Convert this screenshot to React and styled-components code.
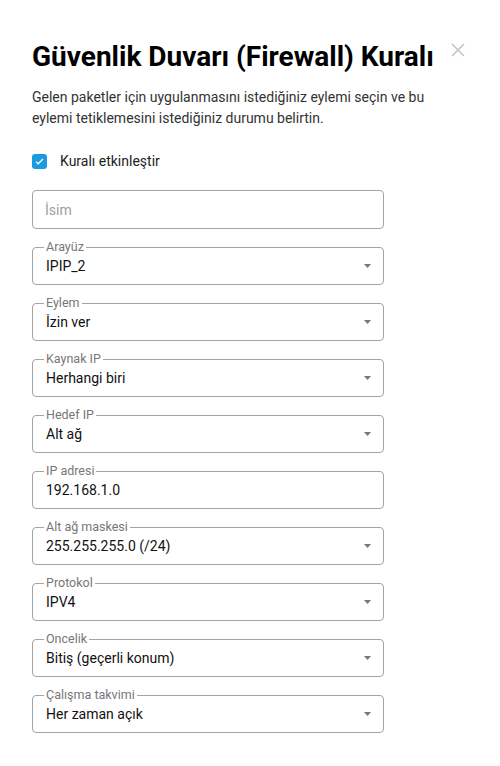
import React from 'react';
import styled, { createGlobalStyle } from 'styled-components';

const Global = createGlobalStyle`
  body {
    margin: 0;
    background: #fff;
    font-family: Roboto, "Liberation Sans", sans-serif;
    color: #111;
  }
`;

const Dialog = styled.div`
  position: relative;
  width: 500px;
  padding: 39px 0 0 32px;
  box-sizing: border-box;
`;

const Close = styled.button`
  position: absolute;
  top: 42px;
  left: 450px;
  width: 16px;
  height: 16px;
  padding: 0;
  border: 0;
  background: none;
  cursor: pointer;
`;

const Title = styled.h1`
  margin: 0;
  font-size: 28px;
  line-height: 36px;
  font-weight: 700;
  color: #000;
`;

const Lead = styled.p`
  margin: 12px 0 0;
  width: 400px;
  font-size: 14px;
  line-height: 21px;
  color: #333;
`;

const CheckRow = styled.label`
  display: flex;
  align-items: center;
  gap: 13px;
  margin-top: 24px;
  font-size: 14px;
  color: #222;
`;

const Box = styled.span`
  width: 15px;
  height: 15px;
  border-radius: 3px;
  background: #1a9be0;
  display: flex;
  align-items: center;
  justify-content: center;
`;

const Form = styled.div`
  display: flex;
  flex-direction: column;
  gap: 18px;
  width: 352px;
  margin-top: 21px;
`;

const Plain = styled.div`
  height: 39px;
  box-sizing: border-box;
  border: 1px solid #a3a3a3;
  border-radius: 4px;
  padding: 0 12px;
  display: flex;
  align-items: center;
  font-size: 14px;
  color: #9e9e9e;
`;

const Field = styled.fieldset`
  margin: -7px 0 0;
  padding: 0 11px 0 11px;
  border: 1px solid #a3a3a3;
  border-radius: 4px;
  min-width: 0;
`;

const Legend = styled.legend`
  padding: 0 2px;
  font-size: 12.5px;
  line-height: 14px;
  color: #777;
`;

const Value = styled.div`
  display: flex;
  align-items: center;
  justify-content: space-between;
  box-sizing: border-box;
  height: 30px;
  padding: 0 1px 6px 2px;
  font-size: 14px;
  color: #111;
`;

const Caret = () => (
  <svg width="7" height="4" viewBox="0 0 7 4">
    <path d="M0 0h7L3.5 4z" fill="#777" />
  </svg>
);

const fields = [
  ['Arayüz', 'IPIP_2', true],
  ['Eylem', 'İzin ver', true],
  ['Kaynak IP', 'Herhangi biri', true],
  ['Hedef IP', 'Alt ağ', true],
  ['IP adresi', '192.168.1.0', false],
  ['Alt ağ maskesi', '255.255.255.0 (/24)', true],
  ['Protokol', 'IPV4', true],
  ['Oncelik', 'Bitiş (geçerli konum)', true],
  ['Çalışma takvimi', 'Her zaman açık', true],
];

export default function App() {
  return (
    <Dialog>
      <Global />
      <Close aria-label="close">
        <svg width="16" height="16" viewBox="0 0 16 16">
          <path d="M2 2l12 12M14 2L2 14" stroke="#c4c4c4" strokeWidth="1.6" />
        </svg>
      </Close>
      <Title>Güvenlik Duvarı (Firewall) Kuralı</Title>
      <Lead>
        Gelen paketler için uygulanmasını istediğiniz eylemi seçin ve bu eylemi tetiklemesini
        istediğiniz durumu belirtin.
      </Lead>
      <CheckRow>
        <Box>
          <svg width="9" height="7" viewBox="0 0 9 7">
            <path d="M1 3.6l2.2 2.2L8 1" stroke="#fff" strokeWidth="1.3" fill="none" />
          </svg>
        </Box>
        Kuralı etkinleştir
      </CheckRow>
      <Form>
        <Plain>İsim</Plain>
        {fields.map(([label, value, select]) => (
          <Field key={label}>
            <Legend>{label}</Legend>
            <Value>
              {value}
              {select && <Caret />}
            </Value>
          </Field>
        ))}
      </Form>
    </Dialog>
  );
}
